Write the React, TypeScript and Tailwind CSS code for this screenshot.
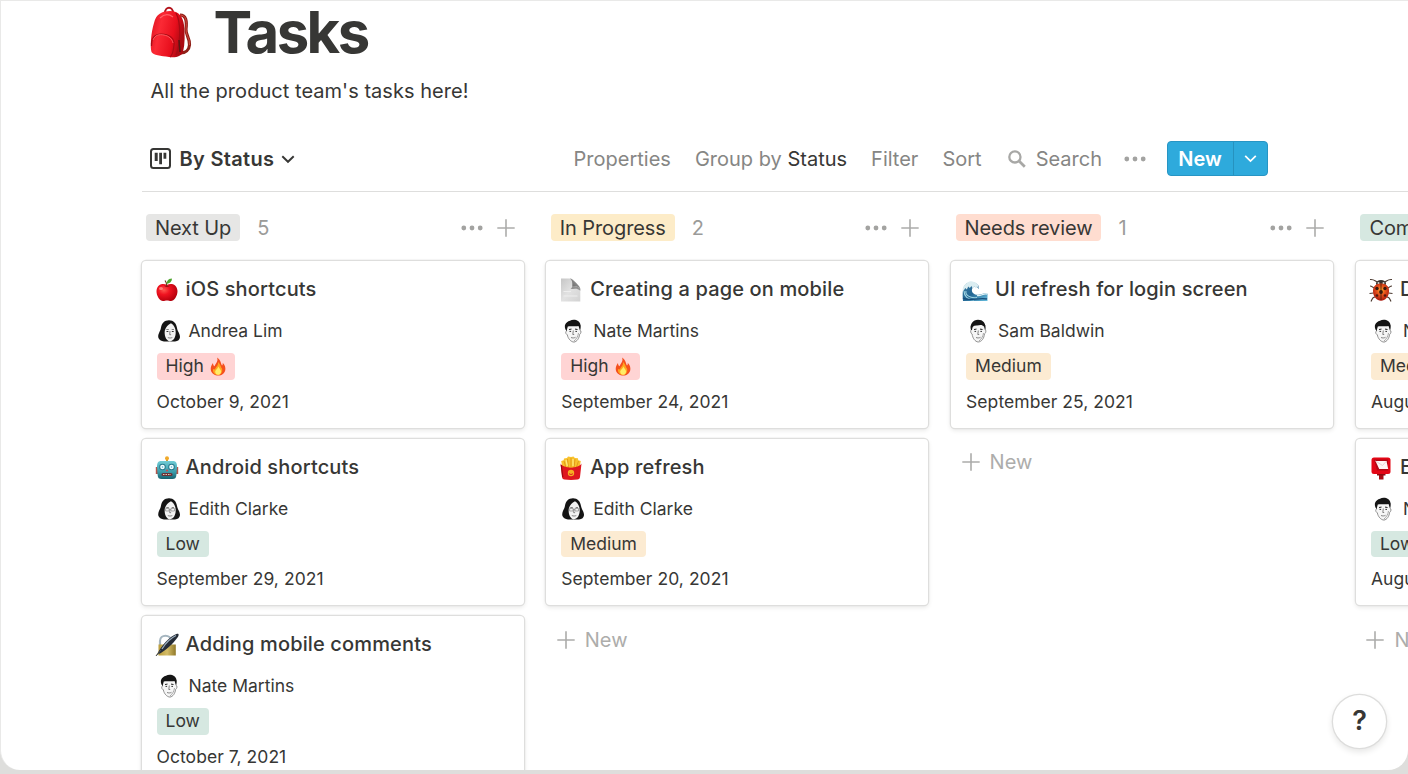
import React from "react";

type IconName = "apple" | "robot" | "pen" | "page" | "fries" | "wave" | "ladybug" | "postbox";
type Person = "Andrea Lim" | "Edith Clarke" | "Nate Martins" | "Sam Baldwin";
type Priority = "High" | "Medium" | "Low";

interface Task {
  icon: IconName;
  title: string;
  person: Person;
  priority: Priority;
  date: string;
}

interface Column {
  name: string;
  count: number;
  tag: string;
  tasks: Task[];
  more?: boolean;
}

const columns: Column[] = [
  {
    name: "Next Up",
    count: 5,
    tag: "bg-[#e6e6e5]",
    tasks: [
      { icon: "apple", title: "iOS shortcuts", person: "Andrea Lim", priority: "High", date: "October 9, 2021" },
      { icon: "robot", title: "Android shortcuts", person: "Edith Clarke", priority: "Low", date: "September 29, 2021" },
      { icon: "pen", title: "Adding mobile comments", person: "Nate Martins", priority: "Low", date: "October 7, 2021" },
    ],
    more: true,
  },
  {
    name: "In Progress",
    count: 2,
    tag: "bg-[#fdecc8]",
    tasks: [
      { icon: "page", title: "Creating a page on mobile", person: "Nate Martins", priority: "High", date: "September 24, 2021" },
      { icon: "fries", title: "App refresh", person: "Edith Clarke", priority: "Medium", date: "September 20, 2021" },
    ],
  },
  {
    name: "Needs review",
    count: 1,
    tag: "bg-[#ffddd0]",
    tasks: [
      { icon: "wave", title: "UI refresh for login screen", person: "Sam Baldwin", priority: "Medium", date: "September 25, 2021" },
    ],
  },
  {
    name: "Completed",
    count: 2,
    tag: "bg-[#d6e8e1]",
    tasks: [
      { icon: "ladybug", title: "D", person: "Nate Martins", priority: "Medium", date: "August" },
      { icon: "postbox", title: "E", person: "Nate Martins", priority: "Low", date: "August" },
    ],
  },
];

const priorityStyle: Record<Priority, string> = {
  High: "bg-[#ffd4d4]",
  Medium: "bg-[#fcebd2]",
  Low: "bg-[#d6e8e1]",
};

function Backpack() {
  return (
    <svg className="h-[52px] w-[42px] shrink-0" viewBox="0 0 42 52">
      <defs>
        <linearGradient id="bp" x1="0" x2="1" y1="0" y2="0.3">
          <stop offset="0" stopColor="#d9101c" />
          <stop offset="0.35" stopColor="#fb2a35" />
          <stop offset="0.75" stopColor="#e80f1d" />
          <stop offset="1" stopColor="#ac0a12" />
        </linearGradient>
      </defs>
      <path d="M30 9c6 0 7 6 6 14-.5 6 4 9 3.500 16-.4 5-4 8-9 8" fill="none" stroke="#8f2018" strokeWidth="3.200" />
      <path d="M30 9c6 0 7 6 6 14-.5 6 4 9 3.500 16" fill="none" stroke="#d3463c" strokeWidth="1" />
      <path d="M15 7c0-7 8-7 8 0" fill="none" stroke="#b3131b" strokeWidth="2" />
      <path d="M4 17C6 8 12 5 20 5c9 0 13 6 14 14 1 9 1 19-1 27-1 4-7 6-14 5C11 50 3 49 1.500 46c-1.500-5-.5-20 2.500-29z" fill="url(#bp)" />
      <path d="M26 7c5 9 5 30 0 42" fill="none" stroke="#a80a14" strokeWidth="1.300" />
      <path d="M1.500 40C1 33 4 28 11 28c8 0 14 4 13 11-.5 5-1 10-4 12" fill="none" stroke="#a80b15" strokeWidth="1.200" />
      <path d="M3 34c2-5 6-6 11-5 5 1 8 4 9 8" fill="none" stroke="#ff6a6c" strokeWidth=".8" />
      <path d="M10 12c4-4 9-4 13-1" fill="none" stroke="#ff6066" strokeWidth="1.200" />
      <path d="M29 34l1 12" stroke="#5a1713" strokeWidth="1.600" />
    </svg>
  );
}

function TaskIcon({ name }: { name: IconName }) {
  const cls = "h-6 w-6 shrink-0";
  switch (name) {
    case "apple":
      return (
        <svg className={cls} viewBox="0 0 24 24">
          <defs>
            <radialGradient id="ap" cx=".35" cy=".35" r=".7">
              <stop offset="0" stopColor="#ff5a50" />
              <stop offset=".4" stopColor="#f01320" />
              <stop offset="1" stopColor="#b3000c" />
            </radialGradient>
          </defs>
          <path d="M12 7C9 5 2 5.500 1.500 13c-.2 5 3.500 10 6.500 10 1.500 0 2.500-.6 4-.6s2.500.6 4 .6c3 0 6.600-5 6.500-10C22 5.500 15 5 12 7z" fill="url(#ap)" />
          <path d="M12 8.500c0-3-.8-4.500-2-6" fill="none" stroke="#6b3a17" strokeWidth="1.200" />
          <path d="M11.500 6C12 2 14 .8 17 .6c0 3-2 5-5.500 5.400z" fill="#4ca52c" />
          <path d="M9.500 7.800c2 1 3.500 1 5 0" fill="none" stroke="#8e0911" strokeWidth=".8" />
          <ellipse cx="6" cy="10.500" rx="2" ry="1.500" fill="#ff9b8e" opacity=".75" />
        </svg>
      );
    case "robot":
      return (
        <svg className={cls} viewBox="0 0 24 24">
          <defs>
            <linearGradient id="rb" x1="0" x2="0" y1="0" y2="1">
              <stop offset="0" stopColor="#71ccd5" />
              <stop offset=".6" stopColor="#3b9dab" />
              <stop offset="1" stopColor="#16616f" />
            </linearGradient>
          </defs>
          <path d="M11 2h2v4h-2z" fill="#c79a3c" />
          <circle cx="12" cy="2.200" r="2" fill="#f0a92b" />
          <path d="M.8 11h3v7h-3zM20.200 11h3v7h-3z" fill="#b4554a" />
          <path d="M6 5h12c3 0 4 2 4 6l-.6 8c-.3 3-1.400 4-4 4H6.600c-2.600 0-3.700-1-4-4L2 11c0-4 1-6 4-6z" fill="url(#rb)" />
          <circle cx="7.500" cy="11" r="3.300" fill="#28788c" />
          <circle cx="16.500" cy="11" r="3.300" fill="#28788c" />
          <circle cx="7.500" cy="11" r="2.300" fill="#f4ffff" />
          <circle cx="16.500" cy="11" r="2.300" fill="#f4ffff" />
          <circle cx="7.500" cy="11" r=".8" fill="#56b0d0" />
          <circle cx="16.500" cy="11" r=".8" fill="#56b0d0" />
          <path d="M12 13l1.400 2.300h-2.800z" fill="#d3484c" />
          <rect x="6.500" y="17" width="11" height="3" rx="1.500" fill="#6b3237" />
          <path d="M8 18.500h8" stroke="#e5c8b6" strokeWidth="1.200" strokeDasharray="1.500 1" />
        </svg>
      );
    case "pen":
      return (
        <svg className={cls} viewBox="0 0 24 24">
          <defs>
            <linearGradient id="lk" x1="0" x2="1" y1="0" y2="0">
              <stop offset="0" stopColor="#b99b39" />
              <stop offset=".5" stopColor="#d5bd68" />
              <stop offset="1" stopColor="#91792a" />
            </linearGradient>
          </defs>
          <path d="M5 12V8c0-7 11-7 11 0v4" fill="none" stroke="#a5b5bf" strokeWidth="2.200" />
          <path d="M3.500 11.500h17.300v11H3.500z" fill="url(#lk)" />
          <path d="M.5 23.300L4.500 17l2.500 2z" fill="#807443" />
          <path d="M3 20.500C5 14 15 3 22 .8c2.200-.5 2 1.700.3 4C18 11 10 18 5 20.500z" fill="#252c37" />
          <path d="M7 16C10 11 16 5 21 2.500" fill="none" stroke="#9aacbc" strokeWidth="1.300" />
          <path d="M1 23l5-6" stroke="#4a5058" strokeWidth="1" />
        </svg>
      );
    case "page":
      return (
        <svg className={cls} viewBox="0 0 24 24">
          <defs>
            <linearGradient id="pg" x1="0" x2="1" y1="0" y2="1">
              <stop offset="0" stopColor="#c6c6c6" />
              <stop offset=".5" stopColor="#e2e2e2" />
              <stop offset="1" stopColor="#d2d2d2" />
            </linearGradient>
            <linearGradient id="pf" x1="0" x2="1" y1="1" y2="0">
              <stop offset="0" stopColor="#5e5e5e" />
              <stop offset="1" stopColor="#aaaaaa" />
            </linearGradient>
          </defs>
          <path d="M2 .6h9c2 .2 3 1 4 2l5 5.400c.8.800 1.300 2 1.300 3.500v12H2z" fill="url(#pg)" />
          <path d="M11 .6c2 1.500 2.500 3.500 2.300 7.500 3 0 6 .4 8 2.500C21 8.500 13.500.7 11 .6z" fill="url(#pf)" />
          <path d="M13.300 8c3-.4 6 .4 8 2.800v2C18 9.500 15 11 11.500 11c1-.6 1.500-1.500 1.800-3z" fill="#929292" />
          <path d="M4.500 13.500H12M4.500 18h14" stroke="#eeeeee" strokeWidth="1" />
        </svg>
      );
    case "fries":
      return (
        <svg className={cls} viewBox="0 0 24 24">
          <path d="M3.500 12L2.200 5l2.500-.8L5 2.500 8 2l1-1.400 3 .4 2.500-.6 1.400 1.600 3 .2.400 2 2.500.8L20.500 12z" fill="#f9c22c" />
          <path d="M5 5l2 7M8.500 3l1 9M12 2v10M16 3l-1 9M19.500 5l-2.300 7" stroke="#d78b12" strokeWidth=".7" />
          <path d="M7 4l1.300 6M14 3v7" stroke="#ffeb83" strokeWidth="1.200" />
          <path d="M1.500 7.500c3 5.500 18 5.500 21 0L21 21c-.2 1.500-1 2.300-2.500 2.500-4 .5-9 .5-13 0C4 23.300 3.200 22.500 3 21z" fill="#df171f" />
          <path d="M2.300 9l1.500 12" stroke="#9e0a12" strokeWidth="1.200" />
          <circle cx="12" cy="17" r="3.200" fill="#f7ae24" />
          <path d="M10 17.500c1 1.300 3 1.300 4 0" fill="none" stroke="#d9281d" strokeWidth="1" />
        </svg>
      );
    case "wave":
      return (
        <svg className="-ml-[3px] h-6 w-[27px] shrink-0" viewBox="0 0 27 24">
          <defs>
            <linearGradient id="wv" x1="0" x2="1" y1="0" y2="1">
              <stop offset="0" stopColor="#38789d" />
              <stop offset=".5" stopColor="#246794" />
              <stop offset="1" stopColor="#68bfe0" />
            </linearGradient>
          </defs>
          <path d="M2 23c-.5-4-.5-8 0-11C3 6 7 3.500 12 4.500c4 .5 6.500 3 6 6.500-2-2.500-5-3-6.500-1-2 3.500 1 7 5.500 6.800 4 .2 5.500-2.500 9.500-1V23z" fill="url(#wv)" />
          <path d="M1.500 12C2 8 4 6 6 5c2-2 5-2 7-1 3 .6 5 3.500 4.700 6.500l-1.700-2-1.300 2-1.500-2-1.700 1.700L10.500 8l-1.700 2-1.500-1.500-1.500 3-1.500-1.500L2.500 13z" fill="#dbedf1" />
          <path d="M5 13c-1 4 4 7.500 11 6.500M3 13c0 5 4 9 10 9" fill="none" stroke="#a2d6e3" strokeWidth="1.100" />
          <path d="M2 20c7 4 15-1 24 1" fill="none" stroke="#174c79" strokeWidth="1.300" />
          <path d="M16 17.500c4 1 6-2.500 10-1.500" fill="none" stroke="#e4f3f6" strokeWidth="1.300" />
        </svg>
      );
    case "ladybug":
      return (
        <svg className={cls} viewBox="0 0 24 24">
          <defs>
            <radialGradient id="lb" cx=".5" cy=".4" r=".6">
              <stop offset="0" stopColor="#ffb52a" />
              <stop offset=".45" stopColor="#e7531c" />
              <stop offset="1" stopColor="#aa170d" />
            </radialGradient>
          </defs>
          <path d="M8 4C6 3 5 1 1 1.500M16 4c2-1 3-3 7-2.500M5 10C3 9 3 8 1 8M19 10c2-1 2-2 4-2M4.500 15l-4 .5M19.500 15l4 .5M6 19c-3 0-3 3-4 4.500M18 19c3 0 3 3 4 4.500" fill="none" stroke="#4d3b32" strokeWidth="1.100" />
          <ellipse cx="12" cy="5.500" rx="5" ry="3.500" fill="#35302d" />
          <path d="M4 13c0-5 3-7.500 8-7.500s8 2.500 8 7.500c0 6-4 9.700-8 9.700S4 19 4 13z" fill="url(#lb)" />
          <path d="M12 6v16" stroke="#50200e" strokeWidth=".9" />
          <circle cx="8" cy="10.500" r="1.700" fill="#38180e" />
          <circle cx="16" cy="10.500" r="1.700" fill="#38180e" />
          <circle cx="12" cy="14" r="1.900" fill="#38180e" />
          <circle cx="8" cy="17.500" r="1.300" fill="#52180e" />
          <circle cx="16" cy="17.500" r="1.300" fill="#52180e" />
          <circle cx="9.500" cy="5" r="1" fill="#d7d0ca" />
          <circle cx="14.500" cy="5" r="1" fill="#d7d0ca" />
        </svg>
      );
    case "postbox":
      return (
        <svg className={cls} viewBox="0 0 24 24">
          <path d="M10 18h4.500v5.500H10z" fill="#a60b12" />
          <path d="M8 17.500h8.500v2H8z" fill="#8b0a10" />
          <rect x="2.500" y="1.500" width="19" height="16.500" rx="2.500" fill="#e30615" />
          <path d="M5 3.500h14v11H8z" fill="#b30713" />
          <path d="M6.500 5h11l1.700 8h-9z" fill="#fff6f5" />
          <path d="M6.500 5l7 4.500 4-4.500" fill="none" stroke="#e6caca" strokeWidth=".8" />
        </svg>
      );
  }
}

function Fire() {
  return (
    <svg className="-mt-px h-[19px] w-[16px]" viewBox="0 0 16 19">
      <path d="M7 .5c4 2.500 3.500 5.500 5 8 .8-.6.900-1.600.700-2.800C15 8 15.700 10.500 15.300 13c-.6 3.500-3.500 5.500-7 5.500S1.300 16.500.8 13C.4 10 1.500 8 3 6c.1 1.700.5 2.600 1.500 3.200C6 6 8.500 4 7 .5z" fill="#f5501d" />
      <path d="M8 5c3 3 2.500 5 4 6.500 1 3.500-1 6.500-4 6.500s-5.500-2.500-5-6c.8.600 1.300.5 2 .3C5.500 10 8.500 9 8 5z" fill="#ffa51f" />
      <path d="M8.300 9.500c1.500 2.500 3 3.500 2.700 5.500-.2 1.900-1.300 2.800-2.900 2.800s-2.900-1.200-2.900-3c0-2 2.700-2.800 3.100-5.300z" fill="#ffed68" />
    </svg>
  );
}

function Avatar({ person }: { person: Person }) {
  if (person === "Andrea Lim" || person === "Edith Clarke") {
    const glasses = person === "Edith Clarke";
    return (
      <svg className="h-6 w-6 shrink-0" viewBox="0 0 24 24">
        <path d="M12 1.200C7.500 1.200 4.800 4 4 8.500c-.5 4-3.300 6-2.700 10 .5 2.300 3 3.800 5.700 4h11c3-.2 4.800-2 5-4.300.2-3.500-2.500-5.700-3-9.200C19.500 4.500 16.500 1.200 12 1.200z" fill="#141414" />
        <path d="M14 4.300C11 5.500 9 8 7.800 11.500c-.7 5 1 9.500 4.700 11 4-.5 6.300-4 6.200-9.500C18.700 9.500 17 6 14 4.300z" fill="#f2f2f2" />
        <path d="M13 12l-.3 3.700h1.400M10.800 18.500c1.500.7 3 .7 4.500 0M9.300 10.500h2.500M14.700 10.500h2.300" fill="none" stroke="#666" strokeWidth=".8" />
        {glasses ? (
          <path d="M8.600 11.500h3.500V14H8.600zM14 11.500h3.500V14H14zM12.100 12.300H14" fill="none" stroke="#888" strokeWidth=".7" />
        ) : (
          <path d="M9.500 12.500h1.900M14.800 12.500h1.900" stroke="#333" strokeWidth="1" />
        )}
      </svg>
    );
  }
  const sam = person === "Sam Baldwin";
  return (
    <svg className="h-6 w-6 shrink-0" viewBox="0 0 24 24">
      <path
        d={
          sam
            ? "M5 7l.4 4c-1.300.3-.8 3.500.7 4 .4 4 3 7.700 6 8 3.500-.2 6-3.500 6.300-8 1.600-.8 2-4 .6-4.200L19 6C16 3 8 3 5 7z"
            : "M5 8l.6 4c-1.500.2-1 3.300.7 3.800.8 4 3.500 7 6.700 7.300 3-.5 5-3.500 5.700-7.800 1.500-.7 1.800-3.800.3-4L19 6C16 3 8 4 5 8z"
        }
        fill="#f6f6f6"
        stroke="#777"
        strokeWidth=".8"
      />
      <path
        d={
          sam
            ? "M5 11C3.500 5 7 1 12 .8c5 0 8.300 3.200 7.300 10.200L18 7.500C16.500 6 15 5.500 11 6.500 8 6.500 6.500 7 6 11z"
            : "M5.500 12C2 7 4.500 3 9 1.800c2-1.400 6-1.300 8 .3 2.800 2 3.200 5.400 2 9L17.500 7C14 8 10 6.500 6.800 7.500z"
        }
        fill="#151515"
      />
      <path d="M8 10.500l2.500-.4M14 10.100l2.500.4" stroke="#222" strokeWidth="1" />
      <path d="M8.500 12.400h1.600M14.400 12.400H16" stroke="#333" strokeWidth="1" />
      <path d="M12.300 11.500l-.5 4h1.400M10 18.500c1.500.6 3 .6 4.500-.2" fill="none" stroke="#666" strokeWidth=".8" />
      <path d="M17.500 14c-.3 3-2 6-4.500 8" fill="none" stroke="#aaa" strokeWidth="1" />
    </svg>
  );
}

function Dots() {
  return (
    <svg className="h-6 w-[22px] shrink-0" viewBox="0 0 22 24" fill="#a3a3a1">
      <circle cx="2.800" cy="12" r="2.400" />
      <circle cx="11" cy="12" r="2.400" />
      <circle cx="19.200" cy="12" r="2.400" />
    </svg>
  );
}

function Plus() {
  return (
    <svg className="h-[18px] w-[18px] shrink-0" viewBox="0 0 18 18" fill="none" stroke="#acacaa" strokeWidth="1.600">
      <path d="M9 .3v17.400M.3 9h17.400" />
    </svg>
  );
}

function Chevron({ className }: { className: string }) {
  return (
    <svg className={className} viewBox="0 0 14 14" fill="none" stroke="currentColor" strokeWidth="1.900">
      <path d="M1.300 4.200L7 9.800l5.700-5.600" />
    </svg>
  );
}

function Card({ task }: { task: Task }) {
  return (
    <article className="h-[166.500px] shrink-0 rounded-[4px] bg-white px-[15px] pt-[7px] whitespace-nowrap shadow-[0_0_0_1.200px_#dededd,0_2px_4px_1px_#ececeb]">
      <h3 className="mb-[3.600px] flex h-[42px] items-center gap-[7px] text-[20px] leading-none font-medium tracking-[0.14px]">
        <span className="-ml-0.5 flex w-6 shrink-0 translate-y-px">
          <TaskIcon name={task.icon} />
        </span>
        {task.title}
      </h3>
      <div className="flex h-[35.300px] items-center gap-2 text-[17.500px]">
        <Avatar person={task.person} />
        {task.person}
      </div>
      <div className="flex h-[35.300px] items-center text-[17.500px]">
        <span className={`flex h-[26.500px] items-center rounded-[4px] px-[9px] ${priorityStyle[task.priority]}`}>
          {task.priority}
          {task.priority === "High" && (
            <span className="ml-[6.500px]">
              <Fire />
            </span>
          )}
        </span>
      </div>
      <div className="flex h-[35.300px] items-center text-[17.500px] tracking-[0.05px]">{task.date}</div>
    </article>
  );
}

function BoardColumn({ column }: { column: Column }) {
  return (
    <section className="w-[382px] shrink-0">
      <header className="flex h-[69px] items-center pt-[2px] pr-[9px] pl-[4.500px] text-[20px] whitespace-nowrap">
        <span className={`flex h-[27px] items-center rounded-[4px] px-[9px] tracking-[-0.1px] ${column.tag}`}>{column.name}</span>
        <span className="ml-[17px] text-[#9b9b99]">{column.count}</span>
        <span className="ml-auto flex items-center gap-[14px]">
          <Dots />
          <Plus />
        </span>
      </header>
      <div className="flex flex-col gap-[11px]">
        {column.tasks.map((task) => (
          <Card key={task.title} task={task} />
        ))}
      </div>
      {!column.more && (
        <button className="flex h-[69px] items-center gap-[10px] pl-[10.500px] text-[20px] text-[#adadab]">
          <Plus />
          New
        </button>
      )}
    </section>
  );
}

export default function App() {
  return (
    <div className="h-[774px] w-[1408px] overflow-hidden bg-[#dededc] font-['Inter','Noto_Sans',sans-serif] text-[#373735]">
      <main className="relative h-[770px] w-full overflow-hidden rounded-b-[20px] border-t border-l border-[#e9e9e8] bg-white pl-[140.500px]">
        <h1 className="flex h-[62px] items-center gap-[22px] pl-[8px] text-[58px] leading-none font-bold tracking-[-2.500px]">
          <Backpack />
          <span className="pr-1">Tasks</span>
        </h1>
        <p className="flex h-[55px] items-center pl-[9px] text-[20px] tracking-[0.04px]">All the product team's tasks here!</p>

        <div className="flex h-[74px] items-center border-b border-[#dededd] pt-[8px] pl-[8px] text-[20px] whitespace-nowrap">
          <button className="flex items-center font-semibold">
            <svg className="mr-[9px] h-[21px] w-[21px]" viewBox="0 0 21 21">
              <rect x="1" y="1" width="19" height="19" rx="2.500" fill="none" stroke="currentColor" strokeWidth="2" />
              <path d="M4.700 4.700h3V13h-3zM9.200 4.700h2.800v11.500H9.200zM13.500 4.700h2.800v6h-2.800z" fill="currentColor" />
            </svg>
            <span className="tracking-[0.32px]">By Status</span>
            <Chevron className="ml-[7px] h-[14px] w-[14px]" />
          </button>
          <div className="mr-[140px] ml-auto flex items-center text-[#868684]">
            <span>Properties</span>
            <span className="ml-6">
              Group by <span className="text-[#373735]">Status</span>
            </span>
            <span className="ml-6">Filter</span>
            <span className="ml-6">Sort</span>
            <svg className="ml-[26px] h-[18px] w-[18px]" viewBox="0 0 18 18" fill="none" stroke="#a8a8a6">
              <circle cx="6.900" cy="6.900" r="5.600" strokeWidth="2.300" />
              <path d="M11.300 11.300l5.500 5.500" strokeWidth="2.700" />
            </svg>
            <span className="mr-[22px] ml-[10px]">Search</span>
            <Dots />
            <button className="ml-[21px] flex h-[35px] overflow-hidden rounded-[4px] border border-[#2795c4] bg-[#2eaadc] font-semibold text-white">
              <span className="flex w-[66px] items-center justify-center border-r border-[#2692bf] pr-px">New</span>
              <span className="flex w-[33px] items-center justify-center">
                <Chevron className="h-[13px] w-[13px]" />
              </span>
            </button>
          </div>
        </div>

        <div className="flex gap-[22.800px]">
          {columns.map((column) => (
            <BoardColumn key={column.name} column={column} />
          ))}
        </div>

        <button className="absolute right-[22px] bottom-[22.500px] flex h-[53px] w-[53px] items-center justify-center rounded-full bg-white text-[27px] font-semibold shadow-[0_0_0_1.300px_#dddddc,0_3px_6px_1px_#e7e7e6]">
          ?
        </button>
      </main>
    </div>
  );
}
